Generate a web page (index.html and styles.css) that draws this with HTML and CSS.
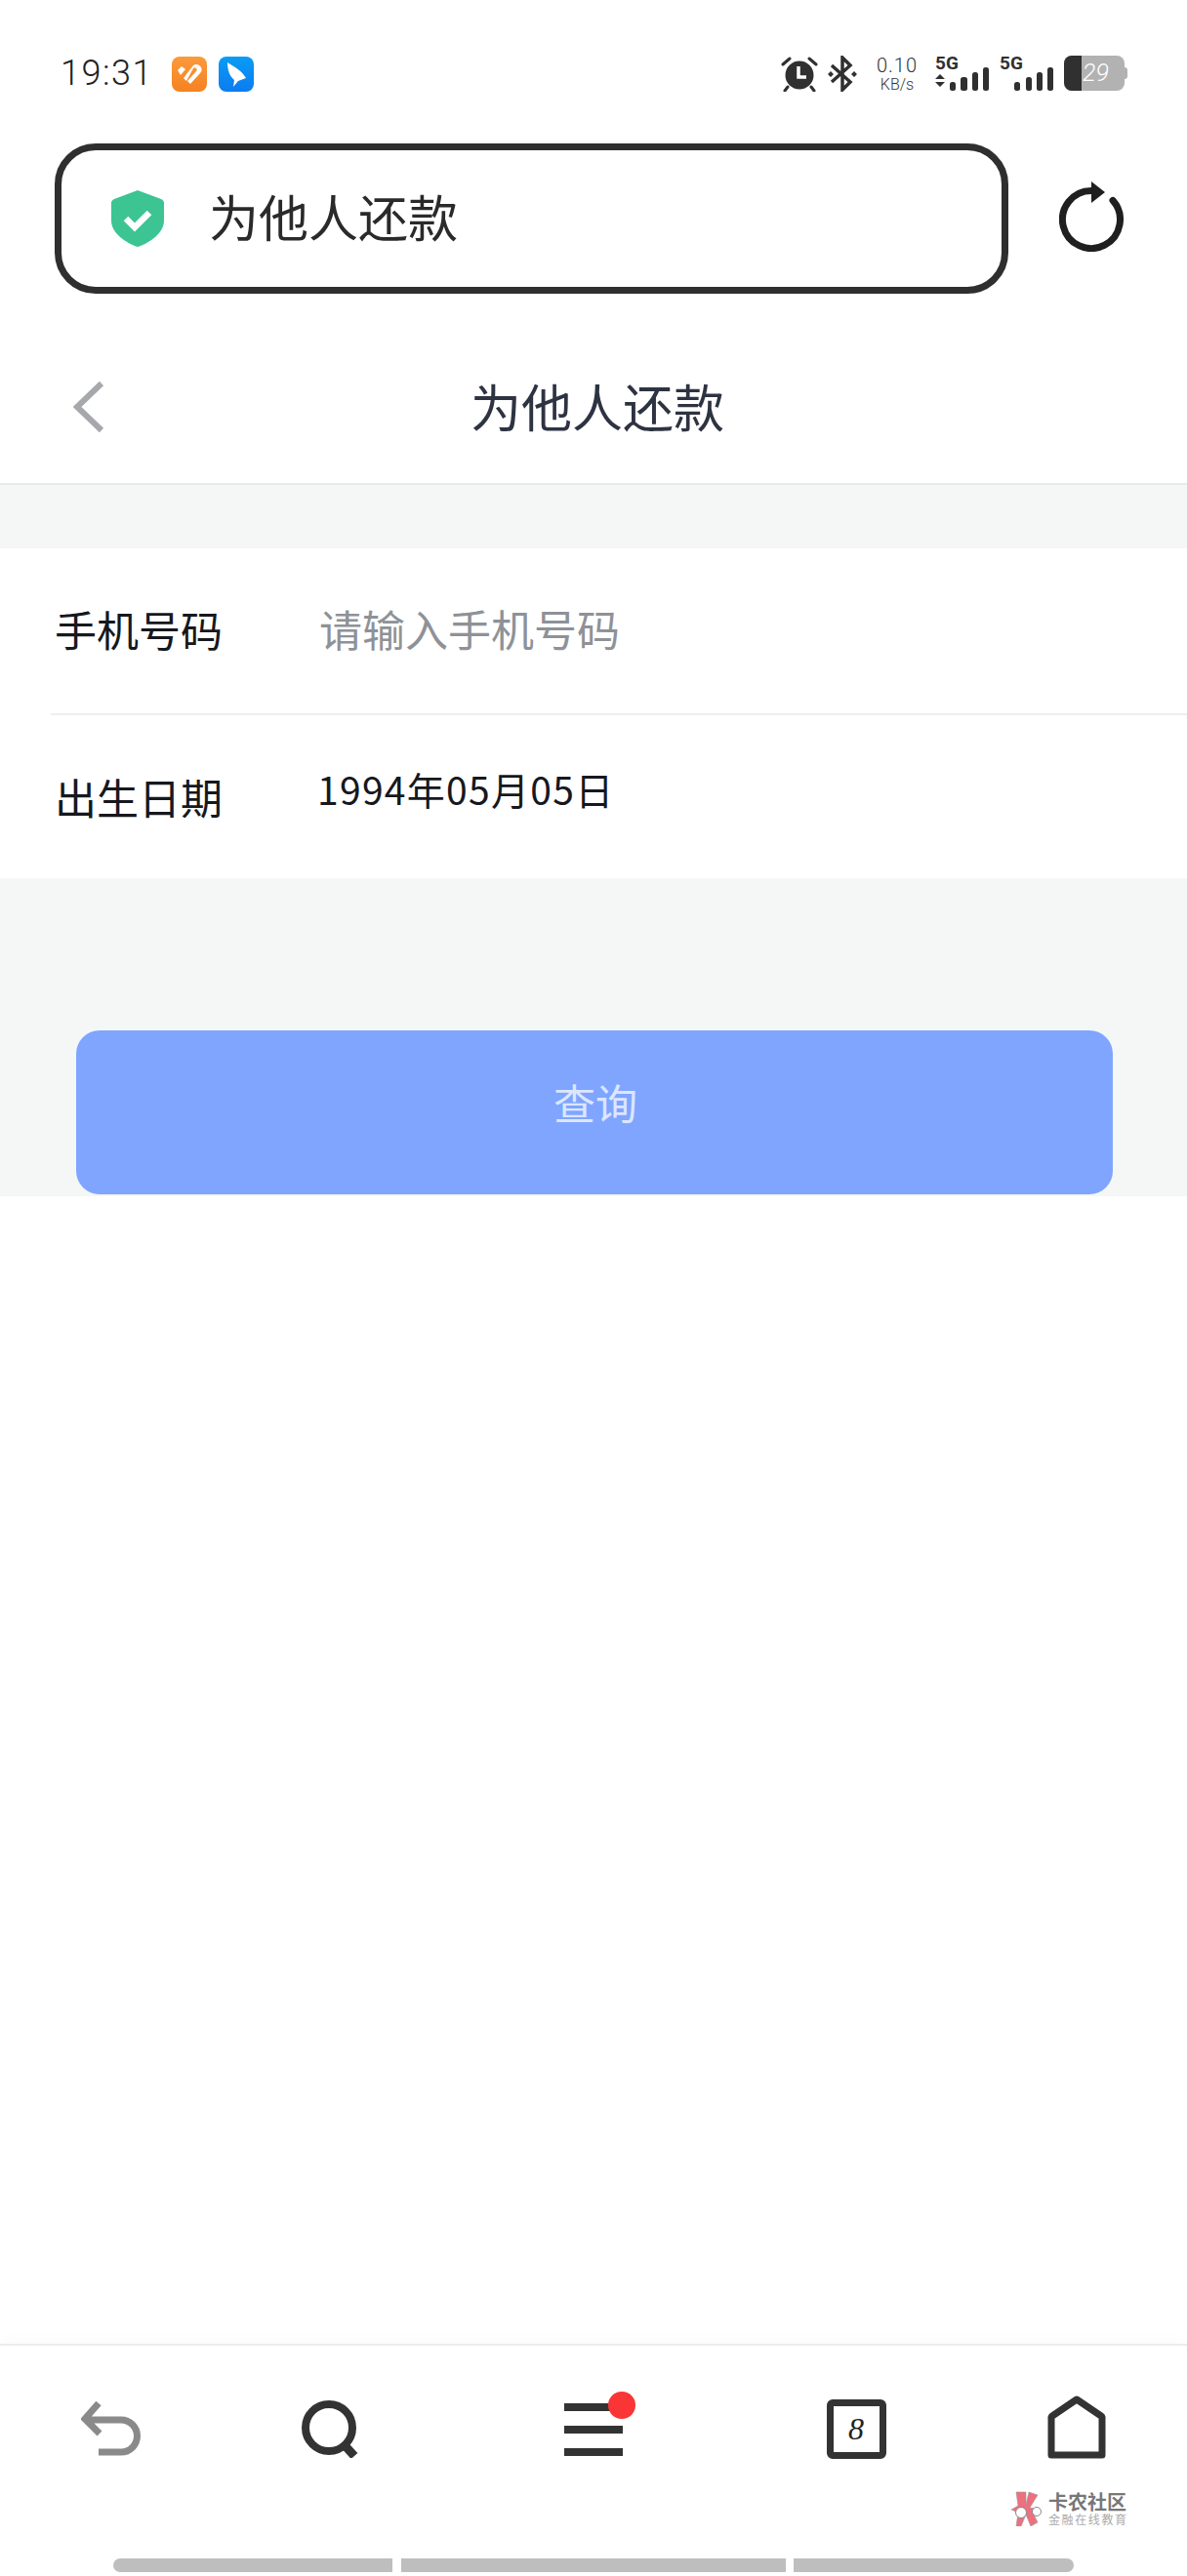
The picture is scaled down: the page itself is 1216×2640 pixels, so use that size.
FILE: index.html
```html
<!DOCTYPE html>
<html lang="zh-CN">
<head>
<meta charset="utf-8">
<title>为他人还款</title>
<link rel="stylesheet" href="styles.css">
</head>
<body>
<div class="page">
  <header class="status">
    <div class="status-left">
      <span class="time">19:31</span>
      <svg class="app-icon" viewBox="0 0 36 36"><defs><linearGradient id="og" x1="0" y1="0" x2="0" y2="1"><stop offset="0" stop-color="#fb9a3c"/><stop offset="1" stop-color="#f58220"/></linearGradient></defs><rect width="36" height="36" rx="8" fill="url(#og)"/><path d="M6 14l4-4 4 3-5 6zM12 22L22 9c3-2 6-1 8 2 1 2 1 4-1 6l-10 11-3-3 9-10c1-1 1-2 0-3s-2-1-3 0l-7 13z" fill="#fff"/></svg>
      <svg class="app-icon blue" viewBox="0 0 36 36"><defs><linearGradient id="bg" x1="0" y1="0" x2="0" y2="1"><stop offset="0" stop-color="#0a9bf5"/><stop offset="1" stop-color="#0c7cf0"/></linearGradient></defs><rect width="36" height="36" rx="8" fill="url(#bg)"/><path d="M9 6c4 3 9 5 12 8 3 2 5 5 7 8l-8 3-5 6 1-7c-5-4-7-11-7-18z" fill="#fff"/></svg>
    </div>
    <div class="status-right">
      <svg class="alarm" viewBox="0 0 38 37"><circle cx="19" cy="20" r="14.5" fill="#303030"/><path d="M18 11v11h8" fill="none" stroke="#fff" stroke-width="3.5"/><path d="M2 9l7-6M36 9l-7-6M7 32l-3 4M31 32l3 4" stroke="#303030" stroke-width="3" stroke-linecap="round"/></svg>
      <svg class="bt" viewBox="0 0 32 37"><path d="M4 10l19 17-8 8V2l8 8L4 27" fill="none" stroke="#303030" stroke-width="3.5"/><path d="M3 16l3 3-3 3-3-3zM27 16l3 3-3 3-3-3z" fill="#303030"/></svg>
      <div class="speed"><span class="speed-num">0.10</span><span class="speed-unit">KB/s</span></div>
      <div class="signal sim1">
        <span class="five-g">5G</span>
        <svg class="bars" viewBox="0 0 56 24"><path d="M0 12l5-5 5 5zM0 15l5 5 5-5z" fill="#303030"/><rect x="15" y="15" width="6" height="9" rx="2.5" fill="#303030"/><rect x="26" y="10" width="7" height="14" rx="2.5" fill="#303030"/><rect x="38" y="5" width="6" height="19" rx="2.5" fill="#303030"/><rect x="49" y="0" width="6" height="24" rx="2.5" fill="#303030"/></svg>
      </div>
      <div class="signal sim2">
        <span class="five-g">5G</span>
        <svg class="bars" viewBox="0 0 56 24"><rect x="15" y="15" width="6" height="9" rx="2.5" fill="#303030"/><rect x="27" y="10" width="6" height="14" rx="2.5" fill="#303030"/><rect x="38" y="5" width="6" height="19" rx="2.5" fill="#303030"/><rect x="49" y="0" width="6" height="24" rx="2.5" fill="#303030"/></svg>
      </div>
      <div class="battery"><span class="battery-fill"></span><span class="battery-num">29</span><span class="battery-nub"></span></div>
    </div>
  </header>

  <section class="url-row">
    <div class="url-box">
      <svg class="shield" viewBox="0 0 54 58"><path d="M27 0l24 9c2 1 3 2 3 4v18c0 13-15 23-27 27C15 54 0 44 0 31V13c0-2 1-3 3-4z" fill="#3cc492"/><path d="M15 29l9 9 15-15" fill="none" stroke="#fff" stroke-width="6.5"/></svg>
      <span class="url-text">为他人还款</span>
    </div>
    <svg class="reload" viewBox="0 0 66 72"><path d="M55 19.4A29.5 29.5 0 1 1 33 9.5" fill="none" stroke="#1f1f1f" stroke-width="7" stroke-linecap="round"/><path d="M33 0l14 11-14 11z" fill="#1f1f1f"/></svg>
  </section>

  <nav class="title-bar">
    <svg class="chevron" viewBox="0 0 36 56"><path d="M31 4L6 28l25 24" fill="none" stroke="#a6a8ab" stroke-width="6"/></svg>
    <h1 class="title">为他人还款</h1>
  </nav>

  <main class="content">
    <div class="form">
      <div class="row row-line">
        <span class="label">手机号码</span>
        <span class="placeholder">请输入手机号码</span>
      </div>
      <div class="row row-second">
        <span class="label">出生日期</span>
        <span class="value">1994年05月05日</span>
      </div>
    </div>
    <div class="action">
      <div class="button">查询</div>
    </div>
  </main>

  <div class="spacer"></div>

  <footer class="toolbar">
    <div class="tools">
      <svg class="tool" width="62" height="58" viewBox="0 0 62 58"><path d="M18 3L4 19l15 15M4 20h37a16 16 0 0 1 0 33H18" fill="none" stroke="#8a8a8a" stroke-width="7"/></svg>
      <svg class="tool" width="60" height="60" viewBox="0 0 60 60"><circle cx="30" cy="29" r="24" fill="none" stroke="#333" stroke-width="8"/><path d="M46 47l10 11" stroke="#333" stroke-width="9"/></svg>
      <svg class="tool" width="90" height="76" viewBox="0 0 90 76"><path d="M15 16h60M15 39h60M15 62h60" stroke="#333" stroke-width="8"/><circle cx="74" cy="14" r="14" fill="#f93535"/></svg>
      <div class="tab-count">8</div>
      <svg class="tool home" width="62" height="66" viewBox="0 0 62 66"><path d="M31 5L56 22a3 3 0 0 1 1 3v37H5V25a3 3 0 0 1 1-3z" fill="none" stroke="#333" stroke-width="7" stroke-linejoin="round"/></svg>
    </div>
    <div class="watermark">
      <svg class="wm-logo" viewBox="0 0 33 36"><path d="M5 1h10v13l3-13 9 3-8 13 11 2-8 3 5 10-7 4-5-12-5 12H5l2-14-7-3 7-4z" fill="#ee6f7e" stroke="#999" stroke-width=".6"/><circle cx="10" cy="22" r="5.5" fill="#fff" stroke="#888"/><circle cx="26" cy="21" r="4.5" fill="#fff" stroke="#888"/></svg>
      <div class="wm-text"><span class="wm-main">卡农社区</span><span class="wm-sub">金融在线教育</span></div>
    </div>
    <div class="gesture">
      <span class="seg seg-left"></span>
      <span class="seg seg-mid"></span>
      <span class="seg seg-right"></span>
    </div>
  </footer>
</div>
</body>
</html>
```

FILE: styles.css
```css
* { box-sizing: border-box; }
html, body { margin: 0; padding: 0; background: #fff; }
body { font-family: "Noto Sans CJK SC", "Noto Sans", sans-serif; color: #16181d; }
.page { position: relative; width: 1216px; height: 2640px; display: flex; flex-direction: column; overflow: hidden; }

/* status bar */
.status { display: flex; justify-content: space-between; align-items: flex-start; height: 147px; padding: 57px 64px 0 62px; }
.status-left { display: flex; align-items: center; height: 37px; }
.time { font-family: "Roboto", sans-serif; font-weight: 300; font-size: 36px; line-height: 37px; letter-spacing: 1.5px; color: #222; width: 114px; }
.app-icon { width: 36px; height: 36px; display: block; }
.blue { margin-left: 12px; }
.status-right { display: flex; align-items: flex-start; height: 37px; }
.alarm { width: 38px; height: 37px; display: block; }
.bt { width: 32px; height: 37px; margin-left: 10px; display: block; }
.speed { width: 46px; margin-left: 16px; display: flex; flex-direction: column; align-items: center; font-family: "Roboto", sans-serif; font-weight: 300; color: #333; }
.speed-num { font-size: 20px; line-height: 20px; letter-spacing: 1px; }
.speed-unit { font-size: 16px; line-height: 19px; }
.signal { position: relative; width: 56px; height: 37px; }
.sim1 { margin-left: 16px; }
.sim2 { margin-left: 10px; }
.five-g { position: absolute; left: 0; top: -2px; font-family: "Roboto", sans-serif; font-weight: 700; font-size: 19px; line-height: 20px; color: #303030; }
.bars { position: absolute; left: 0; top: 12px; width: 56px; height: 24px; display: block; }
.battery { position: relative; width: 62px; height: 36px; margin-left: 10px; background: #b2b2b2; border-radius: 8px; display: flex; }
.battery-fill { width: 18px; height: 36px; background: #303030; border-radius: 8px 0 0 8px; }
.battery-num { font-family: "Roboto", sans-serif; font-style: italic; font-weight: 300; font-size: 25px; line-height: 36px; color: #fff; margin-left: 1px; }
.battery-nub { position: absolute; right: -3px; top: 12px; width: 3px; height: 12px; background: #b2b2b2; border-radius: 0 3px 3px 0; }

/* url row */
.url-row { display: flex; align-items: center; height: 154px; padding-left: 56px; }
.url-box { width: 977px; height: 154px; border: 7px solid #2f2f2f; border-radius: 42px; display: flex; align-items: center; padding-left: 51px; }
.shield { width: 54px; height: 58px; display: block; }
.url-text { font-size: 51px; line-height: 60px; margin: 0 0 6px 46px; color: #2a2a2a; }
.reload { width: 66px; height: 72px; margin-left: 52px; margin-top: -4px; display: block; }

/* title bar */
.title-bar { position: relative; height: 196px; border-bottom: 2px solid #e9eaea; display: flex; align-items: center; justify-content: center; }
.chevron { position: absolute; left: 73px; top: 88px; width: 36px; height: 56px; display: block; }
.title { margin: 0 0 0 8px; font-weight: 400; font-size: 52px; line-height: 60px; color: #2e3342; position: relative; top: 18px; }

/* form */
.content { background: #f5f7f7; padding-top: 65px; height: 729px; }
.form { background: #fff; padding-left: 52px; }
.row { height: 171px; display: flex; align-items: center; }
.row-second { height: 167px; }
.row-line { border-bottom: 2px solid #eeeeee; padding-bottom: 6px; }
.label { width: 276px; padding-left: 4px; font-size: 43px; line-height: 56px; color: #16181d; }
.row-second .label { margin-bottom: 2px; }
.placeholder { font-size: 44px; line-height: 56px; color: #8e9297; margin-left: -1px; }
.value { font-size: 39px; line-height: 56px; letter-spacing: 1.3px; margin: 0 0 18px -3px; color: #16181d; }
.action { padding: 156px 76px 0 78px; }
.button { height: 168px; border-radius: 24px; background: #7fa5ff; color: #dbe6ff; font-size: 43px; line-height: 146px; text-align: center; text-indent: 2px; }

.spacer { flex: 1; }

/* toolbar */
.toolbar { position: relative; height: 238px; border-top: 2px solid #ececec; box-shadow: 0 -6px 10px rgba(0, 0, 0, .015); }
.tools { display: grid; grid-template-columns: 228px 218px 324px 214px 1fr; justify-items: center; align-items: center; height: 172px; padding-bottom: 2px; }
.tool { display: block; }
.tab-count { width: 61px; height: 61px; border: 7px solid #333; border-radius: 6px; display: flex; align-items: center; justify-content: center; font-family: "Liberation Serif", serif; font-style: italic; font-size: 32px; color: #222; }
.home { justify-self: end; margin-right: 82px; margin-top: -4px; }
.watermark { position: absolute; left: 1036px; top: 149px; display: flex; align-items: center; }
.wm-logo { width: 33px; height: 36px; display: block; }
.wm-text { display: flex; flex-direction: column; margin-left: 5px; }
.wm-main { font-size: 20px; line-height: 20px; font-weight: 700; color: #777; white-space: nowrap; }
.wm-sub { font-size: 12px; line-height: 15px; letter-spacing: 1.6px; color: #aaa; white-space: nowrap; }
.gesture { position: absolute; left: 116px; top: 218px; display: flex; gap: 9px; }
.seg { display: block; height: 14px; background: #bebebe; }
.seg-left { width: 286px; border-radius: 7px 0 0 7px; }
.seg-mid { width: 394px; margin-right: -1px; }
.seg-right { width: 287px; border-radius: 0 7px 7px 0; }
```
